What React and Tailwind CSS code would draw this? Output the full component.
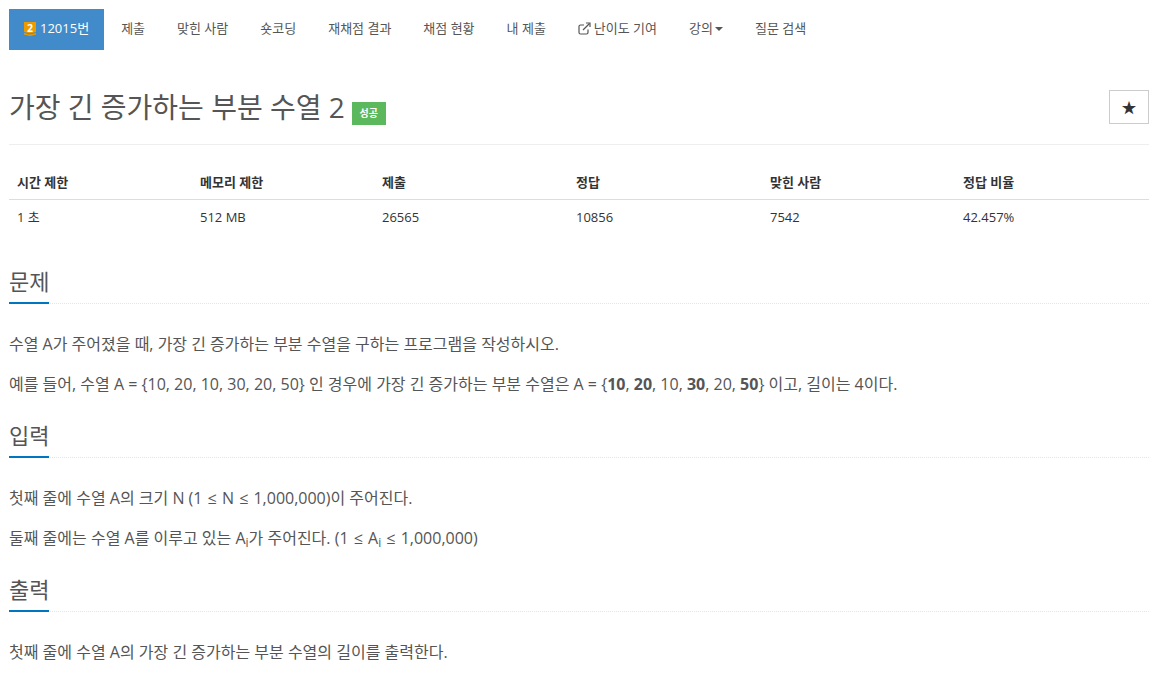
const navItems = ["제출", "맞힌 사람", "숏코딩", "재채점 결과", "채점 현황", "내 제출"];

const stats = [
  { label: "시간 제한", value: "1 초", width: "w-[183px]" },
  { label: "메모리 제한", value: "512 MB", width: "w-[182px]" },
  { label: "제출", value: "26565", width: "w-[194px]" },
  { label: "정답", value: "10856", width: "w-[194px]" },
  { label: "맞힌 사람", value: "7542", width: "w-[193px]" },
  { label: "정답 비율", value: "42.457%", width: "w-[194px]" },
];

const Headline = ({ children }) => (
  <div className="border-b border-dotted border-[#e5e5e5] h-[38px]">
    <h2 className="inline-block h-[38px] border-b-2 border-[#0076c0] text-[22px] leading-[30px] text-[#555]">
      {children}
    </h2>
  </div>
);

const TierIcon = () => (
  <svg width="12" height="14" viewBox="0 0 12 14" className="shrink-0">
    <path d="M0 0H12V10L6 11.500L0 10Z" fill="#ec9a00" />
    <path d="M0 11L6 12.500L12 11V12.500L6 14L0 12.500Z" fill="#ec9a00" />
    <text x="6" y="9.500" textAnchor="middle" fontSize="10.500" fontWeight="700" fill="#fff">
      2
    </text>
  </svg>
);

const ExternalIcon = () => (
  <svg width="13" height="13" viewBox="0 0 13 13" fill="none" stroke="currentColor" strokeWidth="1.2" className="shrink-0">
    <path d="M10 7.500V10.500C10 11.300 9.300 12 8.500 12H2.500C1.700 12 1 11.300 1 10.500V4.500C1 3.700 1.700 3 2.500 3H6" />
    <path d="M5 8L11.500 1.500" />
    <path d="M8 1H12V5" />
  </svg>
);

const Le = () => <span className="mx-px">≤</span>;

const App = () => {
  return (
    <div className="font-['Open_Sans','Noto_Sans_CJK_KR',sans-serif] bg-white w-[1165px] h-[682px] overflow-hidden px-[9px] pt-[9px] text-[#555]">
      {/* Nav */}
      <ul className="flex h-[41px] items-center text-[13px]">
        <li className="flex items-center gap-1 h-full pl-[15px] pr-[15px] pb-[1px] mr-px bg-[#428bca] text-white">
          <TierIcon />
          12015번
        </li>
        {navItems.map((item) => (
          <li key={item} className="px-4 pb-[2px]">
            {item}
          </li>
        ))}
        <li className="flex items-center gap-[3px] pl-4 pr-4 pb-[2px]">
          <ExternalIcon />
          난이도 기여
        </li>
        <li className="flex items-center gap-[2px] px-4 pb-[2px]">
          강의
          <span className="w-0 h-0 border-x-4 border-x-transparent border-t-4 border-t-[#555]" />
        </li>
        <li className="px-4 pb-[2px]">질문 검색</li>
      </ul>

      {/* Title */}
      <div className="flex items-center justify-between mt-[40px] h-[34px] w-[1140px]">
        <div className="flex items-end">
          <h1 className="text-[28px] leading-[38px] text-[#555]">가장 긴 증가하는 부분 수열 2</h1>
          <span className="ml-[7px] mb-px h-[23px] w-[34px] flex items-center justify-center bg-[#5cb85c] text-white text-[10px] font-bold">
            성공
          </span>
        </div>
        <button className="w-10 h-[34px] border border-[#ccc] text-[#333] text-[15px] flex items-center justify-center">
          ★
        </button>
      </div>
      <div className="mt-[20px] border-b border-[#eee] w-[1140px]" />

      {/* Stats */}
      <table className="table-fixed w-[1140px] mt-[19px] text-[13px] text-left">
        <thead>
          <tr className="border-b border-[#ddd] h-[35px] text-[#333]">
            {stats.map((s) => (
              <th key={s.label} className={`${s.width} px-2 pt-[2px] font-bold`}>
                {s.label}
              </th>
            ))}
          </tr>
        </thead>
        <tbody>
          <tr className="h-[37px] text-[#333]">
            {stats.map((s) => (
              <td key={s.label} className="px-2">
                {s.value}
              </td>
            ))}
          </tr>
        </tbody>
      </table>

      {/* Sections */}
      <div className="w-[1140px] text-[16px] leading-[22px]">
        <section className="mt-[30px]">
          <Headline>문제</Headline>
          <p className="mt-[29px]">수열 A가 주어졌을 때, 가장 긴 증가하는 부분 수열을 구하는 프로그램을 작성하시오.</p>
          <p className="mt-[18px]">
            예를 들어, 수열 A = {"{"}10, 20, 10, 30, 20, 50{"}"} 인 경우에 가장 긴 증가하는 부분 수열은 A = {"{"}
            <strong>10</strong>, <strong>20</strong>, 10, <strong>30</strong>, 20, <strong>50</strong>
            {"}"} 이고, 길이는 4이다.
          </p>
        </section>
        <section className="mt-[25px]">
          <Headline>입력</Headline>
          <p className="mt-[29px]">
            첫째 줄에 수열 A의 크기 N (1 <Le /> N <Le /> 1,000,000)이 주어진다.
          </p>
          <p className="mt-[18px]">
            둘째 줄에는 수열 A를 이루고 있는 A<sub className="text-[12px]">i</sub>가 주어진다. (1 <Le /> A
            <sub className="text-[12px]">i</sub> <Le /> 1,000,000)
          </p>
        </section>
        <section className="mt-[25px]">
          <Headline>출력</Headline>
          <p className="mt-[29px]">첫째 줄에 수열 A의 가장 긴 증가하는 부분 수열의 길이를 출력한다.</p>
        </section>
      </div>
    </div>
  );
};

export default App;
